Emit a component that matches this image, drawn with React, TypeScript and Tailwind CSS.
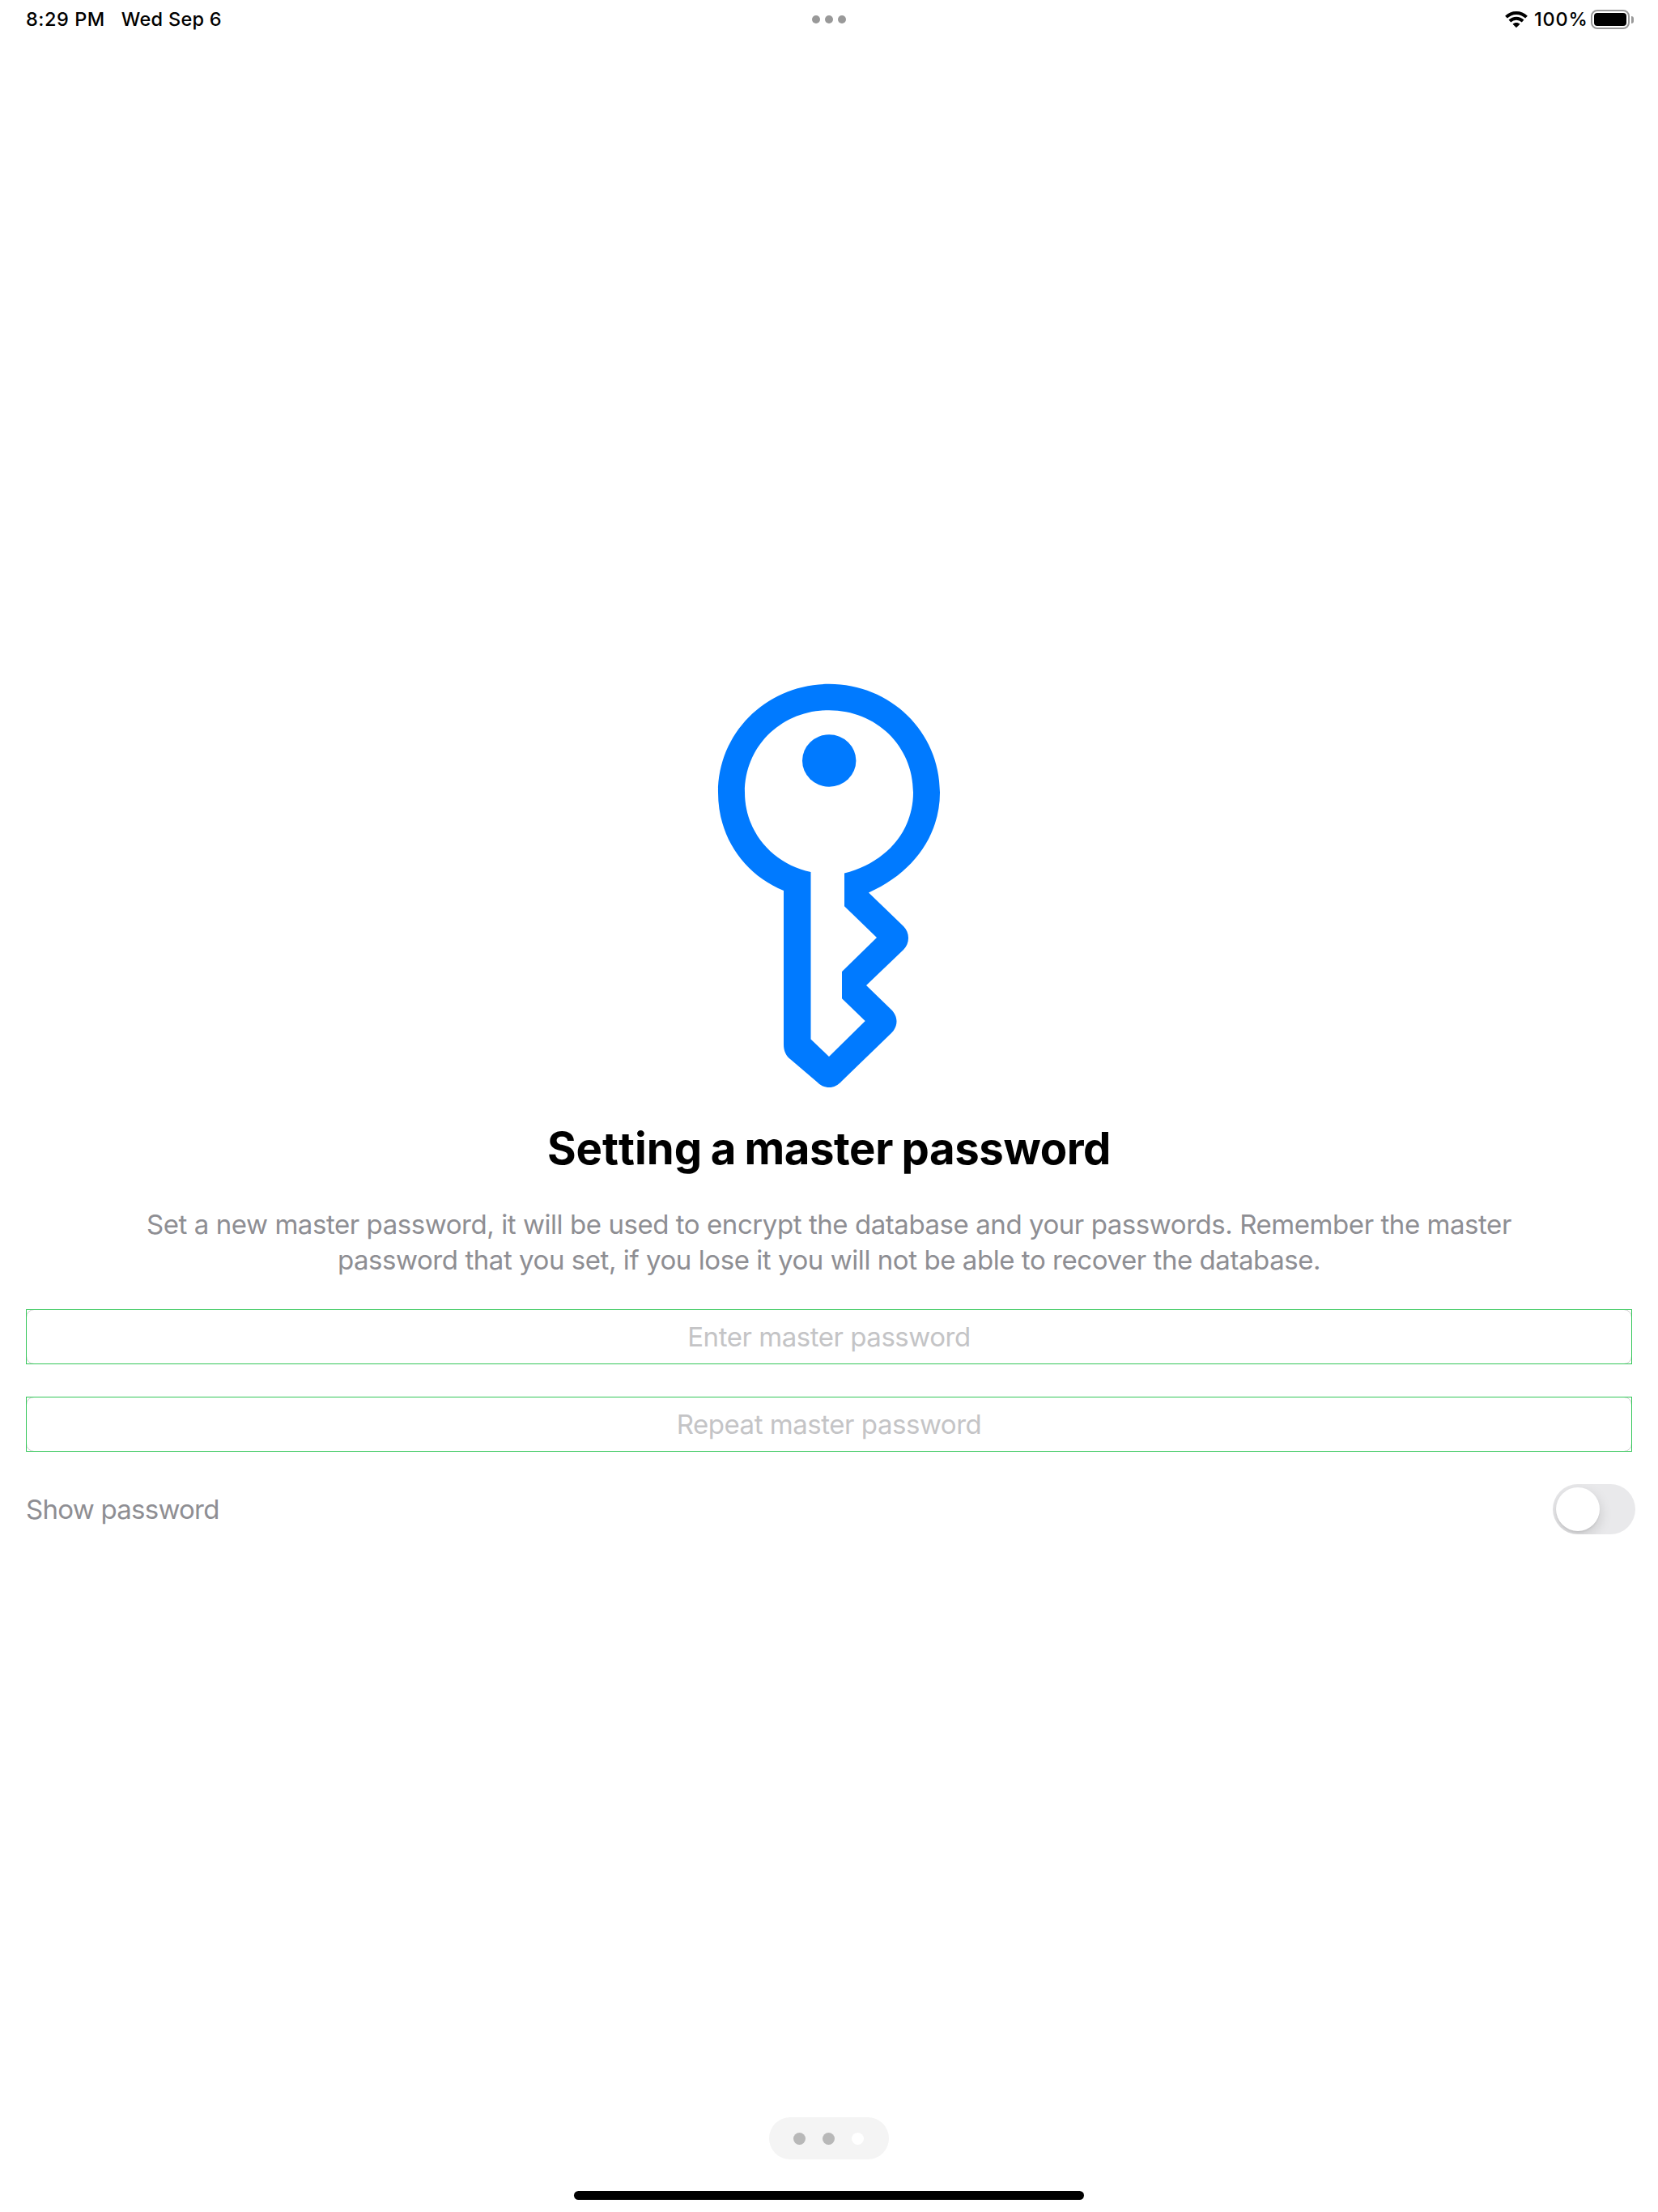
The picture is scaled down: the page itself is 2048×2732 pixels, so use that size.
function KeyIcon() {
  return (
    <svg className="mx-auto block h-[500px] w-[276px]" viewBox="26 24 276 500" fill="#007aff">
      <path
        fillRule="evenodd"
        d="M108 280C59 260 27 214 27 158.700C27 84 88 24.800 164 24.800C240 24.800 301 84 301 158.700C301 212 268 258 213 282.400L256 324C260 328 262 333 262 338.500C262 344 260 349 256 353L210 397L241 427C245 431 247.500 436 247.500 441.500C247.500 447 245 452 241 456L180 515C175 520.500 170 523 164.300 523C159 523 154 521 150 517L116 488C111 484 108 478 108 470ZM141.500 257V463.500L164 485L208.700 441L180 413.200V380L223 338L183 299.200V258.600C233 246 268 208 268 158.700C268 101 222 57.200 164 57.200C106 57.200 60 101 60 158.700C60 207 94 247 141.500 257Z"
      />
      <ellipse cx="164.200" cy="119.500" rx="33.200" ry="32.300" />
    </svg>
  );
}

function WifiIcon() {
  return (
    <svg className="block h-5 w-7" viewBox="0 0 28 20" fill="none" stroke="#000" strokeWidth="3.900">
      <path d="M1.500 7.200C8.400 0.200 19.600 0.200 26.500 7.200" />
      <path d="M5.900 12C10.500 7.600 17.500 7.600 22.100 12" />
      <path d="M9.500 15.800C12.100 13.300 15.900 13.300 18.500 15.800L14 20.200Z" fill="#000" stroke="none" />
    </svg>
  );
}

function StatusBar() {
  return (
    <header className="grid h-12 grid-cols-3 pl-8 pr-[30px] text-[23.5px] leading-[29px] font-medium text-black">
      <div className="flex gap-[20px] pt-[9px]">
        <span className="tracking-[0.55px]">8:29 PM</span>
        <span className="tracking-[0.28px]">Wed Sep 6</span>
      </div>
      <div className="flex items-center justify-center gap-1.5 pr-[2px]">
        <span className="size-2.5 rounded-full bg-[#999]" />
        <span className="size-2.5 rounded-full bg-[#999]" />
        <span className="size-2.5 rounded-full bg-[#999]" />
      </div>
      <div className="flex items-center justify-end">
        <WifiIcon />
        <span className="ml-2 h-[30px] w-[70px] tracking-[0.8px]">100%</span>
        <div className="h-6 w-12 rounded-[8px] border-2 border-[#999] p-0.5">
          <div className="h-full rounded-[4px] bg-black" />
        </div>
        <div className="ml-[2px] h-[9px] w-[3px] rounded-r-full bg-[#999]" />
      </div>
    </header>
  );
}

function PasswordField({ label }: { label: string }) {
  return (
    <div className="relative after:pointer-events-none after:absolute after:inset-0 after:border after:border-[#34c759]">
      <div className="h-[68px] rounded-[10px] border border-[#cdcdcd] text-center text-[33px] leading-[66px] tracking-[-0.46px] text-[#c4c4c6]">
        {label}
      </div>
    </div>
  );
}

export default function App() {
  return (
    <div className="flex h-[2732px] w-[2048px] flex-col bg-white font-['Inter',sans-serif]">
      <StatusBar />
      <main className="flex flex-1 flex-col px-8 pt-[796px]">
        <KeyIcon />
        <h1 className="mt-[41px] text-center text-[54.5px] leading-[66px] font-bold tracking-[-0.4px] [word-spacing:-2px] text-black">
          <span className="tracking-normal [font-feature-settings:'calt'_0] [font-kerning:none]">Setting</span> a master
          password
        </h1>
        <p className="mt-[39px] text-center text-[33px] leading-[44px] tracking-[-0.44px] text-[#8e8e93]">
          Set a new master password, it will be used to encrypt the database and your passwords. Remember the master
          <br />
          password that you set, if you lose it you will not be able to recover the database.
        </p>
        <div className="mt-[39px] flex flex-col gap-10">
          <PasswordField label="Enter master password" />
          <PasswordField label="Repeat master password" />
          <div className="-mr-1 flex h-[62px] items-center justify-between">
            <span className="text-[33px] leading-[62px] tracking-[-0.74px] text-[#8e8e93]">Show password</span>
            <button
              type="button"
              role="switch"
              aria-checked="false"
              aria-label="Show password"
              className="flex h-[62px] w-[102px] items-center overflow-hidden rounded-full bg-[#e9e9eb] px-1"
            >
              <span className="size-[54px] rounded-full bg-white shadow-[0_6px_16px_rgba(0,0,0,0.15),0_2px_2px_rgba(0,0,0,0.06)]" />
            </button>
          </div>
        </div>
      </main>
      <footer className="flex flex-col items-center pb-[15px]">
        <div className="flex h-[52px] w-[148px] items-center justify-center gap-[21px] rounded-full bg-[#f4f4f4] pr-px">
          <span className="size-[15px] rounded-full bg-[#b8b8b8]" />
          <span className="size-[15px] rounded-full bg-[#b8b8b8]" />
          <span className="size-[15px] rounded-full bg-white" />
        </div>
        <div className="mt-[39px] h-[11px] w-[630px] rounded-full bg-black" />
      </footer>
    </div>
  );
}
